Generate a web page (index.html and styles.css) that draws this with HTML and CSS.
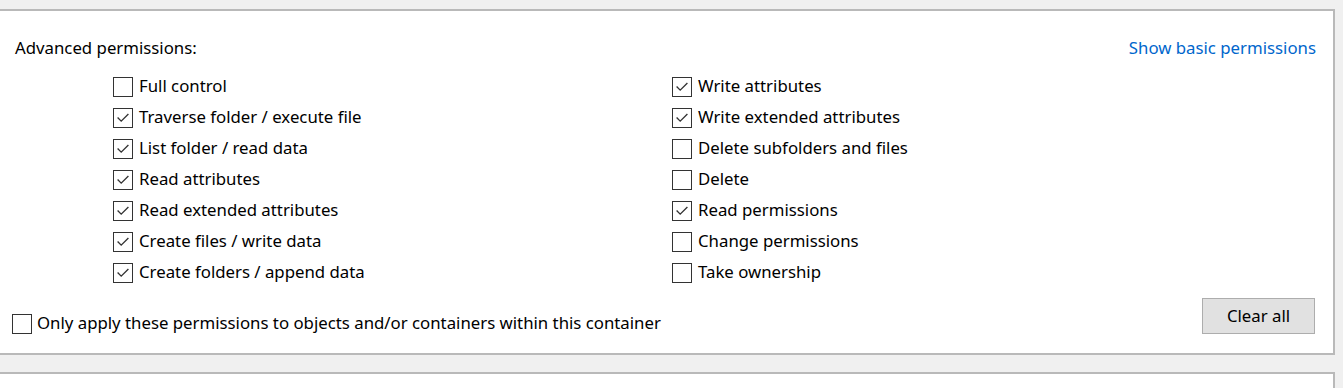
FILE: index.html
```html
<!DOCTYPE html>
<html>
<head>
<meta charset="utf-8">
<link rel="stylesheet" href="styles.css">
</head>
<body>
<div class="panel">
  <div class="header">
    <span class="title">Advanced permissions:</span>
    <a class="link" href="#">Show basic permissions</a>
  </div>
  <div class="grid">
    <div class="col">
      <label class="item"><span class="box"></span><span class="txt">Full control</span></label>
      <label class="item"><span class="box checked"><svg viewBox="0 0 20 20"><path d="M4 9.5 L8 13.5 L16 5.5"/></svg></span><span class="txt">Traverse folder / execute file</span></label>
      <label class="item"><span class="box checked"><svg viewBox="0 0 20 20"><path d="M4 9.5 L8 13.5 L16 5.5"/></svg></span><span class="txt">List folder / read data</span></label>
      <label class="item"><span class="box checked"><svg viewBox="0 0 20 20"><path d="M4 9.5 L8 13.5 L16 5.5"/></svg></span><span class="txt">Read attributes</span></label>
      <label class="item"><span class="box checked"><svg viewBox="0 0 20 20"><path d="M4 9.5 L8 13.5 L16 5.5"/></svg></span><span class="txt">Read extended attributes</span></label>
      <label class="item"><span class="box checked"><svg viewBox="0 0 20 20"><path d="M4 9.5 L8 13.5 L16 5.5"/></svg></span><span class="txt">Create files / write data</span></label>
      <label class="item"><span class="box checked"><svg viewBox="0 0 20 20"><path d="M4 9.5 L8 13.5 L16 5.5"/></svg></span><span class="txt">Create folders / append data</span></label>
    </div>
    <div class="col">
      <label class="item"><span class="box checked"><svg viewBox="0 0 20 20"><path d="M4 9.5 L8 13.5 L16 5.5"/></svg></span><span class="txt">Write attributes</span></label>
      <label class="item"><span class="box checked"><svg viewBox="0 0 20 20"><path d="M4 9.5 L8 13.5 L16 5.5"/></svg></span><span class="txt">Write extended attributes</span></label>
      <label class="item"><span class="box"></span><span class="txt">Delete subfolders and files</span></label>
      <label class="item"><span class="box"></span><span class="txt">Delete</span></label>
      <label class="item"><span class="box checked"><svg viewBox="0 0 20 20"><path d="M4 9.5 L8 13.5 L16 5.5"/></svg></span><span class="txt">Read permissions</span></label>
      <label class="item"><span class="box"></span><span class="txt">Change permissions</span></label>
      <label class="item"><span class="box"></span><span class="txt">Take ownership</span></label>
    </div>
  </div>
  <div class="footer">
    <label class="item apply"><span class="box"></span><span class="txt">Only apply these permissions to objects and/or containers within this container</span></label>
    <button class="btn">Clear all</button>
  </div>
</div>
<div class="panel2"></div>
</body>
</html>
```
FILE: styles.css
```css
html, body {
  margin: 0;
  padding: 0;
  background: #f0f0f0;
  height: 388px;
  overflow: hidden;
}
body {
  font-family: "Noto Sans", "Open Sans", sans-serif;
  font-size: 16.8px;
  color: #000;
}
.panel {
  margin: 9px 8px 0 0;
  background: #fff;
  border: 2px solid #b9b9b9;
  border-left: none;
  height: 342px;
  box-sizing: content-box;
  display: flex;
  flex-direction: column;
}
.header {
  display: flex;
  justify-content: space-between;
  align-items: center;
  height: 22px;
  margin-top: 26px;
  padding: 0 17px 0 15px;
  line-height: 22px;
}
.link {
  color: #0066cc;
  text-decoration: none;
}
.grid {
  display: grid;
  grid-template-columns: 559px 1fr;
  margin: 18px 0 0 113px;
}
.col {
  display: flex;
  flex-direction: column;
  gap: 11px;
}
.item {
  display: flex;
  align-items: center;
  height: 20px;
  line-height: 20px;
  white-space: nowrap;
}
.txt {
  padding-bottom: 2px;
}
.box {
  width: 20px;
  height: 20px;
  box-sizing: border-box;
  border: 1px solid #333;
  background: #fff;
  margin-right: 6px;
  flex: none;
  display: flex;
}
.box svg {
  width: 18px;
  height: 18px;
}
.box path {
  fill: none;
  stroke: #333;
  stroke-width: 1.5;
}
.footer {
  margin-top: auto;
  display: flex;
  justify-content: space-between;
  align-items: flex-end;
  padding: 0 18px 19px 12px;
}
.apply .box {
  margin-right: 5px;
}
.btn {
  width: 113px;
  height: 36px;
  background: #e1e1e1;
  border: 1px solid #adadad;
  font-family: inherit;
  font-size: 16.8px;
  color: #000;
  padding: 0 0 2px 0;
}
.panel2 {
  margin: 17px 8px 0 0;
  background: #fff;
  border: 2px solid #b9b9b9;
  border-left: none;
  border-bottom: none;
  height: 14px;
}
```
